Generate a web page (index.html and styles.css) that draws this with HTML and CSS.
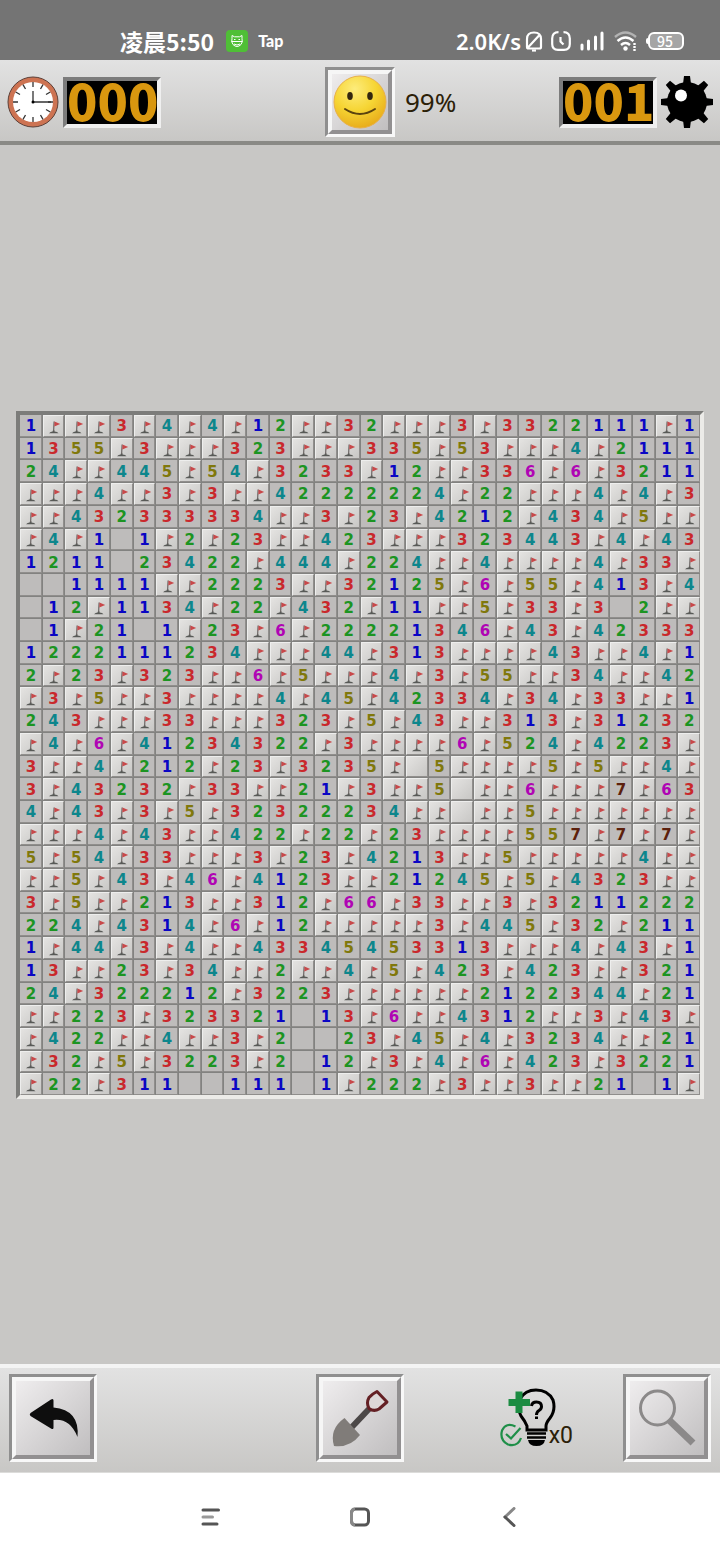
FILE: index.html
```html
<!DOCTYPE html>
<html lang="zh-CN">
<head>
    <meta charset="UTF-8">
    <meta name="viewport" content="width=device-width, initial-scale=1.0">
    <title>Minesweeper</title>
    <link rel="stylesheet" href="styles.css">
</head>
<body>
    <svg class="sprite" aria-hidden="true">
        <symbol id="flag" viewBox="0 0 22 22">
            <path d="M6 17.200Q7.500 15.800 9.600 15.500L10 14.200H11.400L11.600 15.500Q14.500 15.500 15.500 17.200Z" fill="#585a57"/>
            <path d="M11.100 5.500L10.600 15" stroke="#6a6462" stroke-width="1.200"/>
            <path d="M11.500 5.600L17.200 8L11.300 10.600Z" fill="#c8484a"/>
        </symbol>
    </svg>

    <div class="status">
        <span class="time">凌晨5:50</span>
        <svg class="app-icon" width="22" height="22" viewBox="0 0 22 22" fill="none" stroke="#fff">
            <rect width="22" height="22" rx="4" fill="#4fbf36" stroke="none"/>
            <path d="M6 8.5V5.5L8.5 6.8H13.5L16 5.5V8.5Q17 12 15 14.5Q11 18.5 7 14.5Q5 12 6 8.5Z"/>
            <path d="M5.5 11.5H16.5M8 14Q11 16 14 14M8 9.5H9.5M12.5 9.5H14"/>
        </svg>
        <span class="tap">Tap</span>
        <span class="speed">2.0K/s</span>
        <svg width="18" height="22" viewBox="0 0 18 22" fill="none" stroke="#fff" stroke-width="2.200">
            <path d="M2 17V9Q2 2.500 9 2.500Q16 2.500 16 9V17Q16 18.500 14.500 18.500H3.500Q2 18.500 2 17ZM2.500 18L14.500 5"/>
            <path d="M7 20.500H11"/>
        </svg>
        <svg class="alarm" width="20" height="20" viewBox="0 0 20 20" fill="none" stroke="#fff" stroke-width="2.200">
            <path d="M7.500 1.200Q1.200 1.200 1.200 7.500V13Q1.200 18.800 7 18.800H13Q18.800 18.800 18.800 13V7.500Q18.800 1.200 12.500 1.200"/>
            <path d="M9.500 6V10.500L12.500 13.500"/>
        </svg>
        <svg width="24" height="20" viewBox="0 0 24 20" fill="none" stroke="#fff" stroke-width="3" stroke-linecap="round">
            <path d="M2 14V18M8.500 10V18M15.500 6V18M22 2V18"/>
        </svg>
        <svg class="wifi" width="24" height="22" viewBox="0 0 24 22" fill="none" stroke="#fff" stroke-width="2.400">
            <path d="M1 7Q11.500 -2 22 7" opacity=".45"/>
            <path d="M3.500 11Q11.500 4 19.500 11M7 15Q11.500 11 16 15"/>
            <circle cx="11.500" cy="18.500" r="2.200" fill="#fff" stroke="none"/>
            <path d="M20.500 13V21" stroke-dasharray="2 1"/>
        </svg>
        <span class="battery">95</span>
    </div>

    <header class="bar bar-top">
        <div class="side">
            <svg width="52" height="52" viewBox="0 0 52 52">
                <circle cx="26" cy="26" r="25" fill="#cd7352" stroke="#5c4038" stroke-width="1"/>
                <circle cx="26" cy="26" r="20" fill="#fff"/>
                <g fill="none" stroke="#333" stroke-width="1.300">
                    <path d="M26 6V11M26 41V46M6 26H11M41 26H46"/>
                    <path d="M36 8.700L33.500 13M16 8.700L18.500 13M36 43.300L33.500 39M16 43.300L18.500 39"/>
                    <path d="M43.300 16L39 18.500M43.300 36L39 33.500M8.700 16L13 18.500M8.700 36L13 33.500"/>
                    <path d="M26 15V26H44"/>
                </g>
                <circle cx="26" cy="26" r="1.500"/>
            </svg>
            <output class="counter" aria-label="Time">000</output>
        </div>
        <div class="well">
            <button class="key key-face" aria-label="New game">
                <svg width="54" height="54" viewBox="0 0 54 54">
                    <defs>
                        <radialGradient id="skin" cx="40%" cy="25%" r="75%">
                            <stop offset="0" stop-color="#fdec7c"/>
                            <stop offset=".55" stop-color="#f6d534"/>
                            <stop offset="1" stop-color="#e9ae1c"/>
                        </radialGradient>
                    </defs>
                    <circle cx="27" cy="27" r="26" fill="url(#skin)" stroke="#e8b04a" stroke-width="1"/>
                    <ellipse cx="17" cy="21" rx="2.800" ry="4" fill="#33260f"/>
                    <ellipse cx="37" cy="21" rx="2.800" ry="4" fill="#33260f"/>
                    <path d="M12 34Q27 44 42 34" fill="none" stroke="#5b430f" stroke-width="2" stroke-linecap="round"/>
                </svg>
            </button>
        </div>
        <div class="side">
            <span class="percent">99%</span>
            <output class="counter push" aria-label="Mines left">001</output>
            <svg width="52" height="52" viewBox="0 0 52 52">
                <circle cx="26" cy="26" r="20"/>
                <path d="M23 0H29L30 8H22ZM23 52H29L30 44H22ZM0 23V29L8 30V22ZM52 23V29L44 30V22Z"/>
                <path transform="rotate(45 26 26)" d="M23 -1H29L30 8H22ZM23 53H29L30 44H22ZM-1 23V29L8 30V22ZM53 23V29L44 30V22Z"/>
                <circle cx="20" cy="19.500" r="6" fill="#fff"/>
            </svg>
        </div>
    </header>

    <main class="field">
        <div class="board" id="board"></div>
    </main>

    <footer class="bar bar-bottom">
        <div class="side">
            <div class="well">
                <button class="key" aria-label="Undo">
                    <svg width="74" height="74" viewBox="0 0 74 74">
                        <path d="M14.500 32Q13 33.500 14.500 35L35 47.500Q37.500 49 37.500 46.500V39Q54 37 61.500 56Q64 29 37.500 26.500V19.500Q37.500 17 35 18.500Z" fill="#0e0e0e"/>
                    </svg>
                </button>
            </div>
        </div>
        <div class="well">
            <button class="key" aria-label="Dig">
                <svg width="74" height="74" viewBox="0 0 74 74">
                    <path d="M28 47L46 28" stroke="#4c4848" stroke-width="6"/>
                    <path d="M21.500 37L37 54Q27 67 11 65Q6 48 21.500 37Z" fill="#807c79"/>
                    <path d="M54 10.500L64 21L56 28Q51 31 46 27.500Q43 22 46 16.500Q49 13 54 10.500Z" fill="#ddd8d8" stroke="#642024" stroke-width="3" stroke-linejoin="round"/>
                </svg>
            </button>
        </div>
        <div class="side side-right">
            <button class="hint" aria-label="Hint, x0">
                <svg width="56" height="60" viewBox="0 0 56 60">
                    <path d="M27 42V38Q25 33 21 28Q16 19 20 11Q25 2 36 2Q48 2 53 12Q56 22 50 30Q46 35 46 38V42Z" fill="none" stroke="#000" stroke-width="3"/>
                    <path d="M27 45.500H46M27 49.500H46" stroke="#000" stroke-width="2.500"/>
                    <path d="M28 52H45Q44 58 36.500 58Q29 58 28 52Z"/>
                    <path d="M31.500 18Q32 14 36.500 14Q41.500 14 41.500 18.500Q41.500 21 39 22.500Q36.500 24 36.500 27" fill="none" stroke="#000" stroke-width="3"/>
                    <path d="M35 28.500H38V31H35Z"/>
                    <path d="M15.500 3.500H22.500V11H30V18H22.500V25H15.500V18H8.500V11H15.500Z" fill="#1c8c42"/>
                    <g fill="none" stroke="#1f8f48" stroke-width="2.200">
                        <path d="M15.500 38.500Q6 34 2 42.500Q-0.500 52 8 56.500Q18 59 21 50"/>
                        <path d="M6 46L11 50.500L20.500 40"/>
                    </g>
                </svg>
                <span>x0</span>
            </button>
            <div class="well">
                <button class="key" aria-label="Zoom">
                    <svg width="74" height="74" viewBox="0 0 74 74" fill="none" stroke="#8b8989">
                        <circle cx="27.500" cy="27" r="17" stroke-width="3"/>
                        <path d="M39 39L63 62" stroke-width="7"/>
                    </svg>
                </button>
            </div>
        </div>
    </footer>

    <nav class="system">
        <button aria-label="Menu">
            <svg width="20" height="20" viewBox="0 0 20 20" fill="none" stroke="#555" stroke-width="3" stroke-linecap="round">
                <path d="M3 3H18.500M3 17H17"/>
                <path d="M3 10H12.500" stroke="#999"/>
            </svg>
        </button>
        <button aria-label="Home">
            <svg width="20" height="20" viewBox="0 0 20 20" fill="none" stroke-width="3">
                <rect x="1.500" y="2" width="17" height="16" rx="4" stroke="#555"/>
                <path d="M5 2Q1.500 2 1.500 6V14Q1.500 18 5 18" stroke="#888"/>
            </svg>
        </button>
        <button aria-label="Back">
            <svg width="20" height="20" viewBox="0 0 20 20" fill="none" stroke-width="3" stroke-linecap="round">
                <path d="M14 1.500L5 10" stroke="#888"/>
                <path d="M5 10L14 18.500" stroke="#555"/>
            </svg>
        </button>
    </nav>
    <script src="script.js"></script>
</body>
</html>
```
FILE: styles.css
```css
* {
    box-sizing: border-box;
}

body {
    display: flex;
    flex-direction: column;
    min-height: 100vh;
    margin: 0;
    font-family: "Noto Sans CJK SC", sans-serif;
    background-color: #c8c7c5;
}

button {
    margin: 0;
    padding: 0;
    border: 0;
    background: none;
    font-family: inherit;
    cursor: pointer;
}

svg {
    display: block;
    flex: none;
}

.sprite {
    position: absolute;
    width: 0;
    height: 0;
}

.status {
    display: flex;
    align-items: center;
    height: 60px;
    padding: 22px 36px 0 120px;
    color: #fff;
    background-color: #747474;
}

.time {
    font-size: 23px;
    font-weight: 700;
    line-height: 24px;
}

.app-icon {
    margin: 0 10px 0 12px;
}

.tap {
    font-family: Lato, sans-serif;
    font-size: 16px;
    font-weight: 900;
    line-height: 20px;
}

.speed {
    margin: 0 4px 0 auto;
    font-family: "Noto Sans", sans-serif;
    font-size: 22px;
    font-weight: 600;
    line-height: 24px;
}

.alarm {
    margin: 0 9px 0 8px;
}

.wifi {
    margin: 0 10px;
}

.battery {
    position: relative;
    width: 36px;
    height: 18px;
    padding-right: 2px;
    border: 2px solid #fff;
    border-radius: 6px;
    font-size: 14px;
    font-weight: 500;
    line-height: 14px;
    text-align: center;
    background-color: #a5a5a5;
}

.battery::before {
    content: "";
    position: absolute;
    top: 4px;
    left: -4px;
    width: 2px;
    height: 6px;
    border-radius: 2px 0 0 2px;
    background-color: #fff;
}

.bar {
    display: grid;
    grid-template-columns: 1fr auto 1fr;
    align-items: center;
    background-image: linear-gradient(#e2e2e2, #c8c7c5);
}

.bar-top {
    height: 85px;
    padding: 3px 7px 0;
    border-bottom: 4px solid #8a8a86;
}

.bar-bottom {
    padding: 6px 9px 10px;
    border-top: 4px solid #f4f4f4;
    border-bottom: 1px solid #dcdcda;
}

.side {
    display: flex;
    align-items: center;
    gap: 4px;
}

.side-right {
    justify-content: flex-end;
    gap: 50px;
}

.counter {
    width: 98px;
    height: 51px;
    border: 4px solid;
    border-color: #7c7c7c #efefef #efefef #7c7c7c;
    color: #d9970f;
    background-color: #000;
    font-size: 50px;
    font-weight: 900;
    line-height: 36px;
    text-align: center;
}

.push {
    margin-left: auto;
}

.percent {
    margin-left: 10px;
    color: #2b2008;
    font-family: "Noto Sans", sans-serif;
    font-size: 26px;
    line-height: 32px;
}

.well {
    border: 3px solid;
    border-color: #8f8f8f #f8f8f8 #f8f8f8 #8f8f8f;
}

.key {
    display: flex;
    align-items: center;
    justify-content: center;
    width: 82px;
    height: 82px;
    border: 4px solid;
    border-color: #f6f6f6 #929091 #929091 #f6f6f6;
    background-image: linear-gradient(135deg, #efedee, #c0bebf);
}

.key-face {
    width: 64px;
    height: 64px;
}

.field {
    display: flex;
    flex: 1;
    align-items: center;
    padding: 17px 16px 16px;
}

.board {
    display: grid;
    grid-template-columns: repeat(30, minmax(0, 1fr));
    grid-template-rows: repeat(30, minmax(0, 1fr));
    gap: 1px;
    width: 100%;
    aspect-ratio: 1;
    border: 4px solid;
    border-color: #7c7c7a #ecebe8 #ecebe8 #7c7c7a;
    background-color: #828280;
}

.cell {
    display: flex;
    align-items: center;
    justify-content: center;
    min-height: 0;
    padding: 2px 0 0 1px;
    border: 1px solid #908e8c;
    border-width: 0 1px 1px 0;
    background-color: #bebcbb;
    font-family: "DejaVu Sans", sans-serif;
    font-size: 15px;
    font-weight: 700;
    line-height: 20px;
}

.closed {
    border-width: 1px;
    border-color: #eeeeed #908e8c #908e8c #eeeeed;
    background-image: linear-gradient(135deg, #e4e3e1, #c8c7c5);
}

.flag {
    width: 22px;
    height: 22px;
}

.n1 { color: #0a06c4; }
.n2 { color: #1c9422; }
.n3 { color: #c9282c; }
.n4 { color: #0d868c; }
.n5 { color: #80780c; }
.n6 { color: #b004b4; }
.n7 { color: #5c200c; }

.hint {
    display: flex;
    align-items: flex-end;
    color: #2b2008;
    font-family: Roboto, sans-serif;
    font-size: 23px;
    line-height: 24px;
}

.hint span {
    margin-left: -7px;
}

.system {
    display: flex;
    align-items: center;
    justify-content: center;
    height: 87px;
    background-color: #fff;
}

.system button {
    display: flex;
    align-items: center;
    justify-content: center;
    width: 150px;
    height: 60px;
}
```
FILE: script.js
```js
// F = flag, # = closed, . = open with no mines around
const rows = [
    '1FFF3F4F4F12FF32FFF3F3322111F1',
    '1355F3FFF323FFF335F53FFF4F2111',
    '24FF445F54F3233F12FF336F6F3211',
    'FFF4FF3F3FF42222224F22FFF4F4F3',
    'FF432333334FF3F23F4212F434F5FF',
    'F4F1.1F2F23FF423FFF323443F4F43',
    '1211.23422F444F224FF4FFFF4F33F',
    '..1111FF2223FF32125F6F55F413F4',
    '.12F1134F22F432F11FF5F33F3.2FF',
    '.1F21.1F23F6F22221346F43F42333',
    '1222111234FFF44F313FFFF43FF4F1',
    '2F23F323FF6F5FFF4F3F55FF34FF42',
    'F3F5FF3FFFF4F45F42334F34F33FF1',
    '243FFF33FFF323F5F43FF313F31232',
    'F4F6F41234322F3FFFF6F524F4223F',
    '3FF4F212F23F3235F#5FFFF5F5FF4F',
    '3F43232F33FF21F3FF5#FF6FFF7F63',
    '4F43F3F5F32322234FF#FF5FFFFFFF',
    'FFF4F43FF422F22F23FFFF557F7F7F',
    '5F54F33FFF3F23F4213FF5FFFFF4FF',
    'FF5F43F46F4123FF21245F5F4323FF',
    '3F5FF213FF312F66F33FF3F3211222',
    '224F4314F6F12FFFFF3F445F32F211',
    '1F44F3F4FF43345453313FFF4F43F1',
    '13FF23F34FF2FF4F5F423F423FF321',
    '24F322212F3223FFFFFF2122344F21',
    'FF223F323321.13F6FF4312FF3F43F',
    'F422FF4FF3F2..23F45F4F3234FF21',
    'F32F5F3223F2.12F3F4F6F423F3221',
    'F22F311..111.1F222F3FF3FF21.1F'
];

const board = document.getElementById('board');

rows.join('').split('').forEach((value, index) => {
    const cell = document.createElement('button');
    cell.className = 'cell';
    cell.dataset.index = index;

    if (value === 'F') {
        cell.classList.add('closed');
        cell.setAttribute('aria-label', 'Flag');
        cell.innerHTML = '<svg class="flag"><use href="#flag"/></svg>';
    } else if (value === '#') {
        cell.classList.add('closed');
        cell.setAttribute('aria-label', 'Closed');
    } else if (value === '.') {
        cell.setAttribute('aria-label', 'Empty');
    } else {
        cell.classList.add('n' + value);
        cell.textContent = value;
    }

    board.appendChild(cell);
});
```
